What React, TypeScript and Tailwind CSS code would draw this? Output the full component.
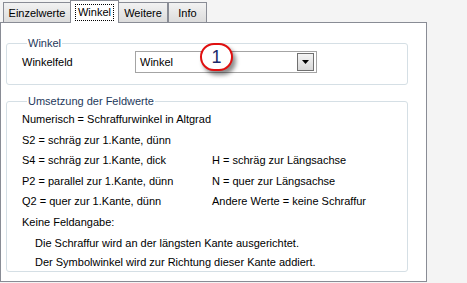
import React from 'react';

const tabs = [
  { id: 'einzel', label: 'Einzelwerte', width: 'w-[68px]' },
  { id: 'winkel', label: 'Winkel', width: 'w-[49px]', active: true },
  { id: 'weitere', label: 'Weitere', width: 'w-[50px]' },
  { id: 'info', label: 'Info', width: 'w-[39px]' },
];

const rows = [
  { left: 'S4 = schräg zur 1.Kante, dick', right: 'H = schräg zur Längsachse' },
  { left: 'P2 = parallel zur 1.Kante, dünn', right: 'N = quer zur Längsachse' },
  { left: 'Q2 = quer zur 1.Kante, dünn', right: 'Andere Werte = keine Schraffur' },
];

function Tab({ label, width, active }: { label: string; width: string; active?: boolean }) {
  if (active) {
    return (
      <div
        className={`${width} h-[23px] -mb-px -mx-[1px] z-10 relative bg-white border border-b-0 border-[#898c95] flex items-center justify-center`}
      >
        <span className="border border-dotted border-black px-[2px] leading-[15px] mt-[1px]">{label}</span>
      </div>
    );
  }
  return (
    <div
      className={`${width} h-[20px] bg-gradient-to-b from-[#f2f2f2] to-[#dcdcdc] border border-b-0 border-[#898c95] flex items-center justify-center pt-[1px]`}
    >
      {label}
    </div>
  );
}

export default function App() {
  return (
    <div
      className="w-[467px] h-[283px] bg-[#f4f4f4] text-[11px] text-black overflow-hidden"
      style={{ fontFamily: '"Liberation Sans", Arial, sans-serif' }}
    >
      <div className="flex items-end h-[22px] pl-[3px]">
        {tabs.map((t) => (
          <Tab key={t.id} label={t.label} width={t.width} active={t.active} />
        ))}
      </div>

      <div className="w-[427px] h-[260px] bg-white border border-[#898c95] px-[5px] pt-[13px]">
        <fieldset className="w-[402px] h-[49px] border border-[#d5dfe5] rounded-[3px] pl-[15px] pr-2">
          <legend className="px-[1px] ml-[5px] text-[#1e395b] leading-[14px]">Winkel</legend>
          <div className="flex items-center mt-[1px]">
            <span className="w-[113px]">Winkelfeld</span>
            <div className="relative w-[182px] h-[22px] border border-[#a4a4a4] bg-white flex items-center pl-[4px]">
              <span>Winkel</span>
              <div className="ml-auto mr-[2px] w-[17px] h-[18px] border border-[#707070] bg-gradient-to-b from-[#f4f4f4] to-[#d8d8d8] flex items-center justify-center">
                <svg width="7" height="4" viewBox="0 0 7 4">
                  <path d="M0 0h7L3.5 4z" fill="#000" />
                </svg>
              </div>
              <div className="absolute left-[64px] top-[-9px] w-[33px] h-[28px] rounded-full border-2 border-[#e01010] bg-white shadow-[3px_4px_4px_rgba(0,0,0,0.45)] flex items-center justify-center text-[18px] text-[#1a2a6a]">
                1
              </div>
            </div>
          </div>
        </fieldset>

        <fieldset className="w-[402px] h-[178px] mt-[9px] border border-[#d5dfe5] rounded-[3px] pl-[15px] pr-2">
          <legend className="px-[1px] ml-[5px] text-[#1e395b] leading-[14px]">Umsetzung der Feldwerte</legend>
          <div className="flex flex-col leading-[20.6px] mt-[1px]">
            <div>Numerisch = Schraffurwinkel in Altgrad</div>
            <div>S2 = schräg zur 1.Kante, dünn</div>
            {rows.map((r) => (
              <div key={r.left} className="flex">
                <span className="w-[190px]">{r.left}</span>
                <span>{r.right}</span>
              </div>
            ))}
            <div>Keine Feldangabe:</div>
            <div className="pl-[13px] leading-[20px]">Die Schraffur wird an der längsten Kante ausgerichtet.</div>
            <div className="pl-[13px] leading-[19px]">Der Symbolwinkel wird zur Richtung dieser Kante addiert.</div>
          </div>
        </fieldset>
      </div>
    </div>
  );
}
